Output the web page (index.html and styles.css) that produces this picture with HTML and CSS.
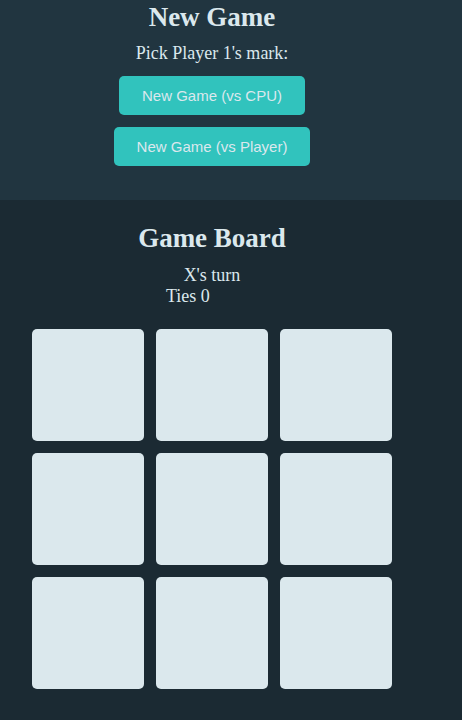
FILE: index.html
```html
<!DOCTYPE html>
<html>
<head>
<meta charset="utf-8">
<link rel="stylesheet" href="styles.css">
</head>
<body>
<section class="top">
  <div class="wrap">
    <h2 class="title">New Game</h2>
    <p class="pick">Pick Player 1's mark:</p>
    <div class="buttons">
      <button class="btn">New Game (vs CPU)</button>
      <button class="btn">New Game (vs Player)</button>
    </div>
  </div>
</section>
<section class="board-section">
  <div class="wrap">
    <h2 class="title">Game Board</h2>
    <div class="turn">X's turn</div>
    <div class="ties">Ties 0</div>
    <div class="grid">
      <div class="cell"></div><div class="cell"></div><div class="cell"></div>
      <div class="cell"></div><div class="cell"></div><div class="cell"></div>
      <div class="cell"></div><div class="cell"></div><div class="cell"></div>
    </div>
  </div>
</section>
</body>
</html>
```
FILE: styles.css
```css
html, body {
  margin: 0;
  padding: 0;
  background: #1b2a33;
  color: #dbe8ed;
  font-family: "Liberation Serif", "Times New Roman", serif;
}
.wrap {
  width: 360px;
  margin-left: 32px;
  display: flex;
  flex-direction: column;
  align-items: center;
}
.top {
  background: #213540;
  padding: 2px 0 34px;
}
.title {
  margin: 0;
  font-size: 27px;
  font-weight: bold;
  line-height: 31px;
}
.pick {
  margin: 10px 0 12px;
  font-size: 18px;
  line-height: 21px;
}
.buttons {
  display: flex;
  flex-direction: column;
  align-items: center;
  gap: 12px;
}
.btn {
  background: #31c3bd;
  color: #dbe8ed;
  border: none;
  border-radius: 5px;
  font-family: "Liberation Sans", Arial, sans-serif;
  font-size: 15px;
  line-height: 17px;
  padding: 11px 23px;
}
.board-section {
  padding: 23px 0 31px;
}
.turn {
  margin-top: 11px;
  font-size: 18px;
  line-height: 21px;
}
.ties {
  align-self: flex-start;
  margin-left: 134px;
  font-size: 18px;
  line-height: 21px;
}
.grid {
  margin-top: 22px;
  align-self: stretch;
  display: grid;
  grid-template-columns: repeat(3, 112px);
  grid-auto-rows: 112px;
  gap: 12px;
}
.cell {
  background: #dbe8ed;
  border-radius: 5px;
}
```
